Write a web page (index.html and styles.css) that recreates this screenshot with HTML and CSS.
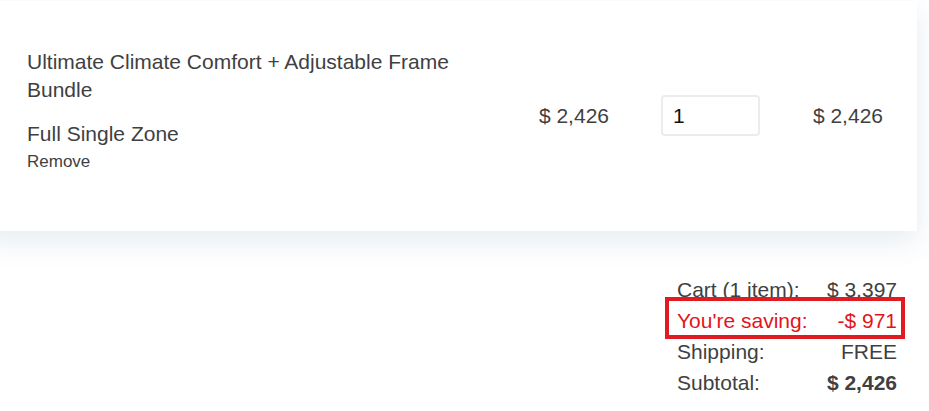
FILE: index.html
```html
<!DOCTYPE html>
<html lang="en">
<head>
    <meta charset="UTF-8">
    <meta name="viewport" content="width=device-width, initial-scale=1.0">
    <title>Cart</title>
    <link rel="stylesheet" href="styles.css">
</head>
<body>
    <div class="cart-card">
        <div class="cart-row">
            <div class="item-info">
                <div class="item-title">Ultimate Climate Comfort + Adjustable Frame Bundle</div>
                <div class="item-variant">Full Single Zone</div>
                <a class="remove-link" href="#">Remove</a>
            </div>
            <div class="item-price">$ 2,426</div>
            <div class="item-qty">
                <input type="text" class="qty-input" value="1">
            </div>
            <div class="item-total">$ 2,426</div>
        </div>
    </div>

    <div class="summary">
        <div class="summary-row">
            <span>Cart (1 item):</span>
            <span>$ 3,397</span>
        </div>
        <div class="summary-row saving">
            <span>You're saving:</span>
            <span>-$ 971</span>
        </div>
        <div class="summary-row">
            <span>Shipping:</span>
            <span>FREE</span>
        </div>
        <div class="summary-row">
            <span>Subtotal:</span>
            <span class="bold">$ 2,426</span>
        </div>
    </div>
</body>
</html>
```

FILE: styles.css
```css
body {
    font-family: "Liberation Sans", Arial, sans-serif;
    color: #403f42;
    margin: 0;
    padding-top: 1px;
    background-color: #fff;
    overflow: hidden;
}
.cart-card {
    background-color: #fff;
    margin-left: -20px;
    width: 937px;
    padding: 47px 34px 48px 47px;
    box-sizing: border-box;
    box-shadow: 0 10px 28px rgba(30, 100, 140, 0.12);
}
.cart-row {
    display: grid;
    grid-template-columns: 1fr 102px 151px 123px;
    align-items: center;
}
.item-info {
    padding-bottom: 11px;
}
.item-title {
    font-size: 21px;
    line-height: 28px;
    max-width: 450px;
}
.item-variant {
    font-size: 21px;
    line-height: 28px;
    margin-top: 16px;
}
.remove-link {
    display: block;
    font-size: 17px;
    line-height: 20px;
    margin-top: 4px;
    color: #403f42;
    text-decoration: none;
}
.item-price, .item-total {
    font-size: 21px;
    text-align: right;
}
.item-qty {
    display: flex;
    justify-content: flex-end;
}
.qty-input {
    width: 99px;
    height: 41px;
    box-sizing: border-box;
    border: 2px solid #ececec;
    border-radius: 4px;
    padding: 0 10px;
    font-family: "Liberation Sans", Arial, sans-serif;
    font-size: 21px;
    color: #111;
    outline: none;
}
.summary {
    width: 220px;
    margin: 43px 32px 0 auto;
}
.summary-row {
    display: flex;
    justify-content: space-between;
    font-size: 21px;
    line-height: 31px;
}
.summary-row.saving {
    position: relative;
    color: #e3141b;
}
.summary-row.saving::after {
    content: "";
    position: absolute;
    top: -8px;
    bottom: -3px;
    left: -12px;
    right: -8px;
    border: 4px solid #e01b22;
}
.bold {
    font-weight: bold;
}
```
